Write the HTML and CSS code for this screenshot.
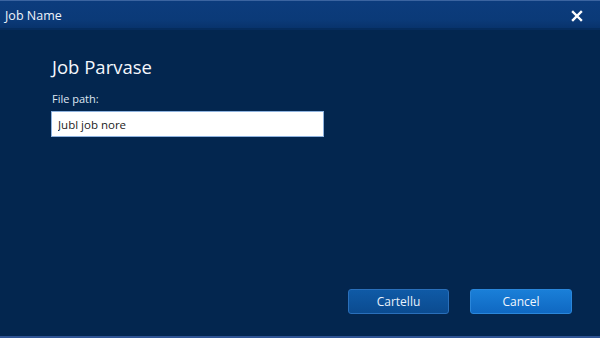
FILE: index.html
```html
<!DOCTYPE html>
<html lang="en">
<head>
  <meta charset="UTF-8" />
  <title>Job Name</title>
  <link rel="stylesheet" href="styles.css">
</head>
<body>

  <!-- DIALOG -->
  <div class="dialog">
    <!-- TITLE BAR -->
    <div class="titleBar">
      <span class="titleText">Job Name</span>
      <svg class="closeIcon" width="12" height="12" viewBox="0 0 12 12">
        <path d="M2 2 L10 10 M10 2 L2 10" stroke="#fff" stroke-width="2.4" stroke-linecap="square" />
      </svg>
    </div>

    <!-- CONTENT -->
    <div class="content">
      <h2 class="heading">Job Parvase</h2>
      <label class="fieldLabel">File path:</label>
      <input class="textField" type="text" value="Jubl job nore" />
    </div>

    <!-- BUTTONS -->
    <div class="footer">
      <button class="btn btnSecondary">Cartellu</button>
      <button class="btn btnPrimary">Cancel</button>
    </div>
  </div>

</body>
</html>
```

FILE: styles.css
```css
/* RESET */
* {
  margin: 0;
  padding: 0;
  box-sizing: border-box;
}

body {
  background-color: #032550;
  font-family: "Open Sans", "Noto Sans", sans-serif;
  color: #fff;
}

/* Dialog frame */
.dialog {
  width: 600px;
  height: 338px;
  display: flex;
  flex-direction: column;
  background-color: #03264f;
  border-top: 1px solid #3b64a0;
  border-bottom: 2px solid #2f5494;
}

/* Title bar with caption and close icon */
.titleBar {
  height: 29px;
  display: flex;
  align-items: center;
  justify-content: space-between;
  padding: 0 17px 0 5px;
  background: linear-gradient(to bottom, #0c3c7d 0%, #0b3a78 70%, #08336c 100%);
  border-bottom: 2px solid #052c5d;
}
.titleText {
  font-size: 12.5px;
  color: #eef3fb;
  margin-top: 2px;
}
.closeIcon {
  margin-top: 2px;
}

/* Main content */
.content {
  flex: 1;
  display: flex;
  flex-direction: column;
  align-items: flex-start;
  padding: 24px 0 0 51px;
}
.heading {
  font-size: 18.5px;
  font-weight: 500;
  color: #f4f7fc;
  margin-bottom: 12px;
  margin-left: 1px;
}
.fieldLabel {
  font-size: 11px;
  color: #dfe7f3;
  margin-bottom: 5px;
  margin-left: 1px;
}
.textField {
  width: 273px;
  height: 26px;
  padding: 0 6px;
  border: 1px solid #8fb3df;
  background-color: #fff;
  font-family: inherit;
  font-size: 11.5px;
  color: #222;
}

/* Footer buttons */
.footer {
  display: flex;
  justify-content: flex-end;
  gap: 21px;
  padding: 0 28px 22px 0;
}
.btn {
  width: 101px;
  height: 25px;
  border-radius: 3px;
  font-family: inherit;
  font-size: 12px;
  color: #e9f1fb;
  cursor: pointer;
}
.btnSecondary {
  background: linear-gradient(to bottom, #0f5aa6 0%, #0b4b90 100%);
  border: 1px solid #2a6fba;
}
.btnPrimary {
  width: 102px;
  background: linear-gradient(to bottom, #1a7fd8 0%, #0f68c2 100%);
  border: 1px solid #2a86da;
  color: #f2f7fd;
}
```
